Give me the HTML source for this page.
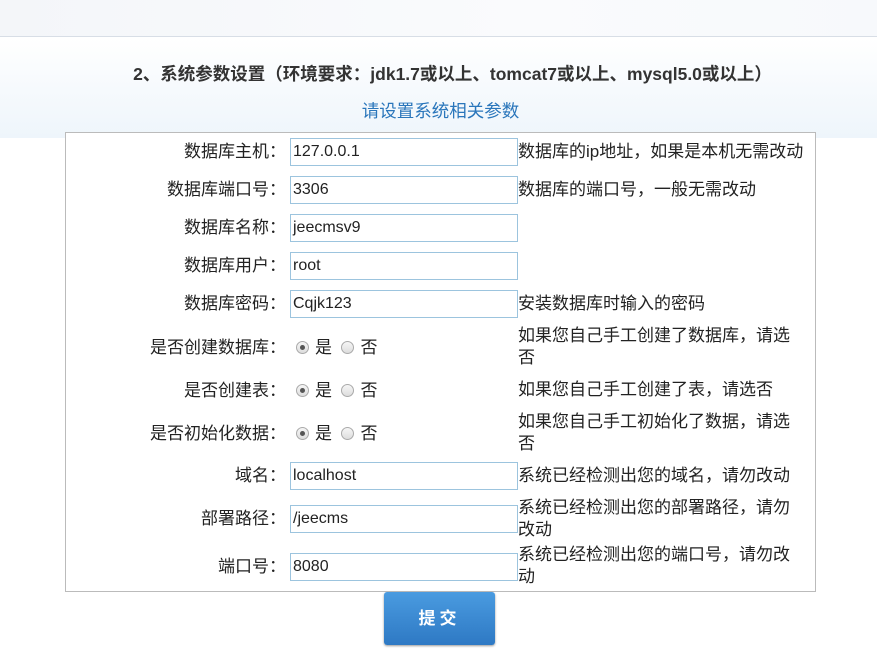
<!DOCTYPE html>
<html><head><meta charset="utf-8"><style>
*{margin:0;padding:0;box-sizing:border-box}
body{width:877px;height:657px;background:#fff;font-family:"Liberation Sans","Noto Sans CJK SC",sans-serif;color:#222;position:relative;overflow:hidden}
.top{position:absolute;left:0;top:0;width:877px;height:37px;background:linear-gradient(90deg,#f4f6f9,#fafbfd 60%,#f7f9fc);border-bottom:1px solid #d8dee6}
.band{position:absolute;left:0;top:38px;width:877px;height:100px;background:linear-gradient(#fff,#eef5fb)}
.h{position:absolute;left:14px;width:877px;top:62px;text-align:center;font-size:17.5px;line-height:24px;font-weight:bold;color:#333}
.sub{position:absolute;left:2px;width:877px;top:99px;text-align:center;font-size:17.5px;line-height:24px;color:#2a76bb}
.box{position:absolute;left:65px;top:132px;width:751px;height:460px;border:1px solid #bbb;background:#fff}
.l{position:absolute;right:591px;font-size:17px;line-height:28px;text-align:right;white-space:nowrap}
.i{position:absolute;left:290px;width:228px;height:28px;border:1px solid #9cc4de;font-size:16px;padding:0 2px;line-height:26px;background:#fff}
.d{position:absolute;left:518px;width:282px;font-size:17px;line-height:22px}
.r{position:absolute;left:296px;font-size:17px;line-height:28px;white-space:nowrap}
.rb{display:inline-block;width:13px;height:13px;border-radius:50%;border:1px solid #aaa;background:linear-gradient(#f6f6f6,#ddd);vertical-align:-1px;margin-right:6px;position:relative}
.rb.on::after{content:"";position:absolute;left:3px;top:3px;width:5px;height:5px;border-radius:50%;background:#555}
.btn{position:absolute;left:384px;top:592px;width:111px;height:53px;border-radius:3px;background:linear-gradient(#4a9be0,#2e79c4);box-shadow:0 1px 2px #999;color:#fff;font-weight:bold;font-size:17px;text-align:center;line-height:53px;letter-spacing:4px}
</style></head><body>
<div class="top"></div><div class="band"></div>
<div class="h">2、系统参数设置（环境要求：jdk1.7或以上、tomcat7或以上、mysql5.0或以上）</div>
<div class="sub">请设置系统相关参数</div>
<div class="box"></div>

<div class="l" style="top:138px">数据库主机：</div><div class="i" style="top:138px">127.0.0.1</div><div class="d" style="top:141px;width:300px">数据库的ip地址，如果是本机无需改动</div>
<div class="l" style="top:176px">数据库端口号：</div><div class="i" style="top:176px">3306</div><div class="d" style="top:179px">数据库的端口号，一般无需改动</div>
<div class="l" style="top:214px">数据库名称：</div><div class="i" style="top:214px">jeecmsv9</div>
<div class="l" style="top:252px">数据库用户：</div><div class="i" style="top:252px">root</div>
<div class="l" style="top:290px">数据库密码：</div><div class="i" style="top:290px">Cqjk123</div><div class="d" style="top:293px">安装数据库时输入的密码</div>

<div class="l" style="top:334px">是否创建数据库：</div><div class="r" style="top:334px"><span class="rb on"></span>是 &nbsp;<span class="rb"></span>否</div><div class="d" style="top:325px">如果您自己手工创建了数据库，请选否</div>
<div class="l" style="top:377px">是否创建表：</div><div class="r" style="top:377px"><span class="rb on"></span>是 &nbsp;<span class="rb"></span>否</div><div class="d" style="top:379px">如果您自己手工创建了表，请选否</div>
<div class="l" style="top:420px">是否初始化数据：</div><div class="r" style="top:420px"><span class="rb on"></span>是 &nbsp;<span class="rb"></span>否</div><div class="d" style="top:411px">如果您自己手工初始化了数据，请选否</div>

<div class="l" style="top:462px">域名：</div><div class="i" style="top:462px">localhost</div><div class="d" style="top:465px">系统已经检测出您的域名，请勿改动</div>
<div class="l" style="top:505px">部署路径：</div><div class="i" style="top:505px">/jeecms</div><div class="d" style="top:497px">系统已经检测出您的部署路径，请勿改动</div>
<div class="l" style="top:553px">端口号：</div><div class="i" style="top:553px">8080</div><div class="d" style="top:544px">系统已经检测出您的端口号，请勿改动</div>

<div class="btn">提交</div>
</body></html>
